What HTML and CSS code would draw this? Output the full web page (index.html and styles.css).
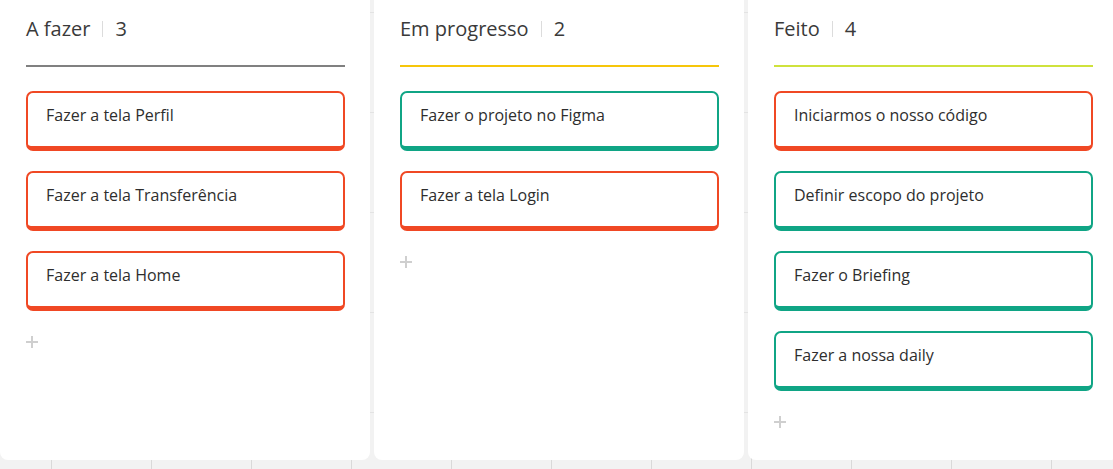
FILE: index.html
```html
<!DOCTYPE html>
<html lang="pt-BR">
<head>
<meta charset="utf-8">
<title>Kanban</title>
<link rel="stylesheet" href="styles.css">
</head>
<body>
<main class="board">
  <section class="column">
    <header class="column-header header-todo">
      <span class="column-title">A fazer</span>
      <span class="column-sep"></span>
      <span class="column-count">3</span>
    </header>
    <div class="cards">
      <div class="card card-red">Fazer a tela Perfil</div>
      <div class="card card-red">Fazer a tela Transferência</div>
      <div class="card card-red">Fazer a tela Home</div>
    </div>
    <button class="add" aria-label="Adicionar"></button>
  </section>
  <section class="column">
    <header class="column-header header-progress">
      <span class="column-title">Em progresso</span>
      <span class="column-sep"></span>
      <span class="column-count">2</span>
    </header>
    <div class="cards">
      <div class="card card-green">Fazer o projeto no Figma</div>
      <div class="card card-red">Fazer a tela Login</div>
    </div>
    <button class="add" aria-label="Adicionar"></button>
  </section>
  <section class="column">
    <header class="column-header header-done">
      <span class="column-title">Feito</span>
      <span class="column-sep"></span>
      <span class="column-count">4</span>
    </header>
    <div class="cards">
      <div class="card card-red">Iniciarmos o nosso código</div>
      <div class="card card-green">Definir escopo do projeto</div>
      <div class="card card-green">Fazer o Briefing</div>
      <div class="card card-green">Fazer a nossa daily</div>
    </div>
    <button class="add" aria-label="Adicionar"></button>
  </section>
</main>
</body>
</html>
```
FILE: styles.css
```css
html, body {
  margin: 0;
  padding: 0;
}

body {
  width: 1113px;
  height: 469px;
  overflow: hidden;
  font-family: "Open Sans", "Noto Sans", sans-serif;
  color: #333;
  background-color: #f2f2f2;
  background-image:
    linear-gradient(to right, #d9d9d9 1px, transparent 1px),
    linear-gradient(to bottom, #e3e3e3 1px, transparent 1px);
  background-size: 100px 100px;
  background-position: 51px 12px;
}

.board {
  display: flex;
  gap: 4px;
  height: 460px;
}

.column {
  flex: 0 0 370px;
  box-sizing: border-box;
  background: #fff;
  border-radius: 0 0 8px 8px;
  padding: 15px 25px 0 26px;
  display: flex;
  flex-direction: column;
}

.column-header {
  display: flex;
  align-items: center;
  height: 28px;
  padding-bottom: 22px;
  border-bottom: 2px solid #808080;
  font-size: 20px;
  line-height: 28px;
  color: #3a3a3a;
}

.header-progress { border-bottom-color: #f6c60a; }
.header-done { border-bottom-color: #cfe23c; }

.column-sep {
  width: 1px;
  height: 16px;
  background: #dcdcdc;
  margin: 0 12px;
}

.cards {
  display: flex;
  flex-direction: column;
  gap: 20px;
  margin-top: 24px;
}

.card {
  box-sizing: border-box;
  height: 60px;
  padding: 11px 18px 0;
  border: 2px solid;
  border-bottom-width: 5px;
  border-radius: 7px;
  font-size: 16px;
  line-height: 22px;
  color: #2e2e2e;
  background: #fff;
}

.card-red { border-color: #f04824; }
.card-green { border-color: #10a585; }

.add {
  position: relative;
  width: 12px;
  height: 12px;
  margin-top: 25px;
  padding: 0;
  border: 0;
  background: transparent;
  cursor: pointer;
}

.add::before,
.add::after {
  content: "";
  position: absolute;
  background: #cfcfcf;
}

.add::before {
  left: 0;
  top: 5px;
  width: 12px;
  height: 2px;
}

.add::after {
  left: 5px;
  top: 0;
  width: 2px;
  height: 12px;
}
```
